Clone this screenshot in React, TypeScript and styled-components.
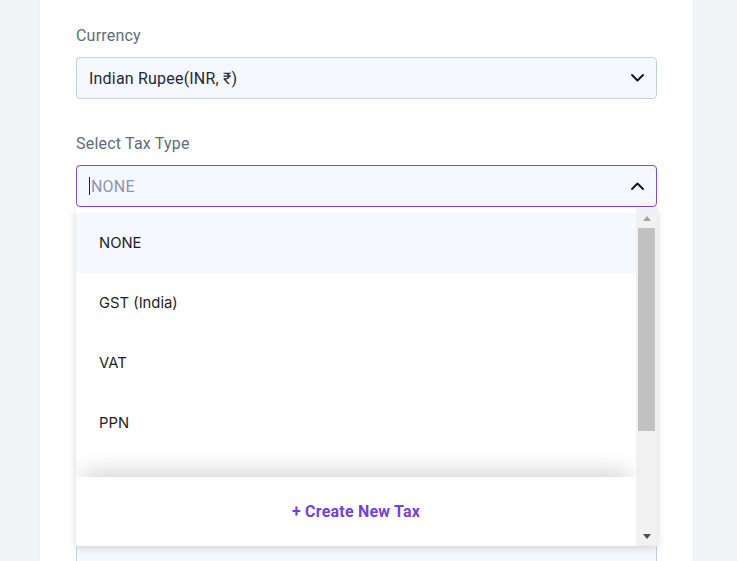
import React from 'react';
import styled, { createGlobalStyle } from 'styled-components';

const GlobalStyle = createGlobalStyle`
  body {
    margin: 0;
    background: #f3f4f6;
    font-family: Roboto, "Liberation Sans", sans-serif;
  }
`;

const Page = styled.div`
  width: 737px;
  height: 561px;
  overflow: hidden;
  padding-left: 40px;
  box-sizing: border-box;
`;

const Card = styled.div`
  width: 653px;
  min-height: 561px;
  box-sizing: border-box;
  background: #ffffff;
  padding: 25px 36px 0;
  box-shadow: 0 0 3px rgba(0, 0, 0, 0.05);
`;

const Field = styled.div`
  position: relative;
  margin-bottom: 34px;
`;

const Label = styled.div`
  font-size: 16px;
  letter-spacing: 0.2px;
  line-height: 20px;
  color: #5f6b7c;
  padding-top: 1px;
  margin-bottom: 11px;
`;

const SelectBox = styled.div<{ focused?: boolean }>`
  height: 42px;
  box-sizing: border-box;
  display: flex;
  align-items: center;
  justify-content: space-between;
  padding: 0 12px;
  background: #f5f8fe;
  border: 1px solid ${({ focused }) => (focused ? '#7c4ddb' : '#c5cee0')};
  border-radius: 4px;
  color: #1f2937;
  font-size: 16px;
  letter-spacing: 0.2px;
`;

const TextArea = styled.div`
  height: 200px;
  box-sizing: border-box;
  background: #f5f8fe;
  border: 1px solid #c5cee0;
  border-radius: 4px;
`;

const Placeholder = styled.span`
  display: flex;
  align-items: center;
  color: #8b95a7;
`;

const Caret = styled.span`
  width: 1px;
  height: 18px;
  background: #222;
  margin-right: 1px;
`;

const Dropdown = styled.div`
  position: absolute;
  top: calc(100% + 1px);
  left: 0;
  right: 0;
  height: 338px;
  display: flex;
  background: #ffffff;
  box-shadow: 0 2px 8px rgba(0, 0, 0, 0.16);
  z-index: 5;
`;

const ListColumn = styled.div`
  flex: 1;
  display: flex;
  flex-direction: column;
  overflow: hidden;
`;

const Options = styled.div`
  flex: 1;
  overflow: hidden;
  padding-top: 5px;
`;

const Option = styled.div<{ active?: boolean }>`
  height: 60px;
  flex-shrink: 0;
  display: flex;
  align-items: center;
  padding-left: 23px;
  background: ${({ active }) => (active ? '#f5f8fe' : '#ffffff')};
  font-family: Inter, "Liberation Sans", sans-serif;
  font-size: 14.8px;
  color: #1e1e1e;
`;

const Footer = styled.div`
  position: relative;
  z-index: 1;
  height: 69px;
  flex-shrink: 0;
  display: flex;
  align-items: center;
  justify-content: center;
  background: #ffffff;
  box-shadow: 0 -12px 22px -6px rgba(0, 0, 0, 0.16);
  color: #7440e0;
  font-size: 16px;
  letter-spacing: 0.2px;
  font-weight: 700;
`;

const Scrollbar = styled.div`
  width: 21px;
  display: flex;
  flex-direction: column;
  background: #f1f1f1;
`;

const ScrollButton = styled.div`
  height: 20px;
  display: flex;
  align-items: center;
  justify-content: center;
`;

const Thumb = styled.div`
  height: 203px;
  margin: 0 2px;
  background: #c1c1c1;
`;

const Track = styled.div`
  flex: 1;
`;

const Arrow = ({ up, color }: { up?: boolean; color: string }) => (
  <svg width="8" height="5" viewBox="0 0 8 5">
    <polygon points={up ? '0,5 8,5 4,0' : '0,0 8,0 4,5'} fill={color} />
  </svg>
);

const Chevron = ({ up }: { up?: boolean }) => (
  <svg width="13" height="8" viewBox="0 0 13 8" fill="none">
    <path
      d={up ? 'M1 7 L6.5 1.5 L12 7' : 'M1 1 L6.5 6.5 L12 1'}
      stroke="#111"
      strokeWidth="1.8"
      strokeLinecap="round"
      strokeLinejoin="round"
    />
  </svg>
);

const taxTypes = ['NONE', 'GST (India)', 'VAT', 'PPN', 'SST'];

export default function App() {
  return (
    <>
      <GlobalStyle />
      <Page>
        <Card>
          <Field>
            <Label>Currency</Label>
            <SelectBox>
              <span>Indian Rupee(INR, ₹)</span>
              <Chevron />
            </SelectBox>
          </Field>

          <Field>
            <Label>Select Tax Type</Label>
            <SelectBox focused>
              <Placeholder>
                <Caret />
                NONE
              </Placeholder>
              <Chevron up />
            </SelectBox>
            <Dropdown>
              <ListColumn>
                <Options>
                  {taxTypes.map((t, i) => (
                    <Option key={t} active={i === 0}>
                      {t}
                    </Option>
                  ))}
                </Options>
                <Footer>+ Create New Tax</Footer>
              </ListColumn>
              <Scrollbar>
                <ScrollButton>
                  <Arrow up color="#a3a3a3" />
                </ScrollButton>
                <Thumb />
                <Track />
                <ScrollButton>
                  <Arrow color="#505050" />
                </ScrollButton>
              </Scrollbar>
            </Dropdown>
          </Field>

          <Field>
            <Label>Tax Number</Label>
            <SelectBox />
          </Field>

          <Field>
            <Label>Address</Label>
            <TextArea />
          </Field>
        </Card>
      </Page>
    </>
  );
}
